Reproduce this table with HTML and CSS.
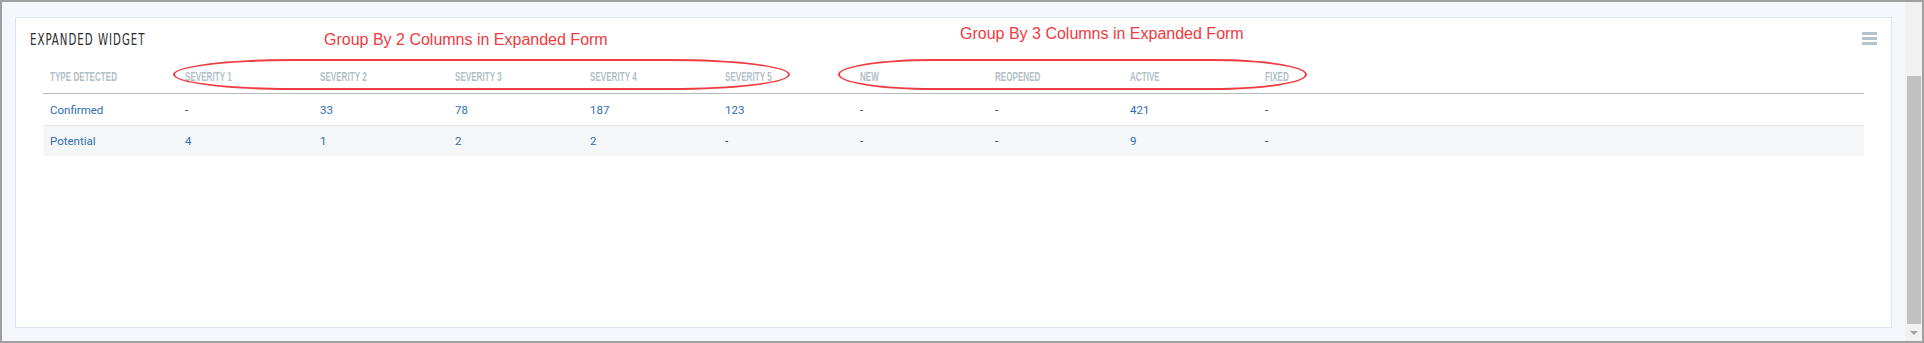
FILE: index.html
```html
<!DOCTYPE html>
<html>
<head>
<meta charset="utf-8">
<link rel="stylesheet" href="styles.css">
</head>
<body>
<div class="window">
  <div class="main">
    <div class="panel">
      <div class="panel-head">
        <div class="title"><span>EXPANDED WIDGET</span></div>
        <div class="menu"><span></span><span></span><span></span></div>
      </div>
      <div class="table">
        <div class="row head">
          <div><span>TYPE DETECTED</span></div><div><span>SEVERITY 1</span></div><div><span>SEVERITY 2</span></div><div><span>SEVERITY 3</span></div><div><span>SEVERITY 4</span></div><div><span>SEVERITY 5</span></div><div><span>NEW</span></div><div><span>REOPENED</span></div><div><span>ACTIVE</span></div><div><span>FIXED</span></div>
        </div>
        <div class="row body">
          <div>Confirmed</div><div class="dash">-</div><div>33</div><div>78</div><div>187</div><div>123</div><div class="dash">-</div><div class="dash">-</div><div>421</div><div class="dash">-</div>
        </div>
        <div class="row body alt">
          <div>Potential</div><div>4</div><div>1</div><div>2</div><div>2</div><div class="dash">-</div><div class="dash">-</div><div class="dash">-</div><div>9</div><div class="dash">-</div>
        </div>
      </div>
    </div>
  </div>
  <div class="scrollbar">
    <div class="sb-top"></div>
    <div class="sb-thumb"></div>
    <div class="sb-down"><i></i></div>
  </div>
  <div class="note note-1">Group By 2 Columns in Expanded Form</div>
  <div class="note note-2">Group By 3 Columns in Expanded Form</div>
  <div class="ring ring-1"></div>
  <div class="ring ring-2"></div>
</div>
</body>
</html>
```
FILE: styles.css
```css
* { box-sizing: border-box; }
html, body { margin: 0; padding: 0; }
body { width: 1924px; height: 343px; overflow: hidden; background: #f5f7fc; }

.window {
  position: relative;
  width: 1924px;
  height: 343px;
  border: 2px solid #a0a0a0;
  display: flex;
  background: #f5f7fc;
}

.main {
  flex: 1;
  padding: 15px 13px 13px 13px;
  display: flex;
}

.panel {
  flex: 1;
  background: #fff;
  border: 1px solid #dce4ef;
  display: flex;
  flex-direction: column;
}

.panel-head {
  display: flex;
  justify-content: space-between;
  align-items: flex-start;
  padding: 12px 14px 0 14px;
}

.title {
  font-family: "DejaVu Sans Condensed", "DejaVu Sans", sans-serif;
  font-size: 16px;
  line-height: 20px;
  letter-spacing: 1.4px;
  color: #2b2b2b;
}
.title span {
  display: inline-block;
  transform: scaleX(0.71);
  transform-origin: left center;
}

.menu {
  margin-top: 2px;
  width: 15px;
  display: flex;
  flex-direction: column;
  gap: 2px;
}
.menu span {
  display: block;
  height: 3px;
  background: #b6c3cb;
}

.table {
  margin: 10px 27px 0 27px;
}

.row {
  display: grid;
  grid-template-columns: repeat(9, 135px) 1fr;
  align-items: center;
}
.row > div { padding-left: 7px; white-space: nowrap; }

.row.head {
  height: 34px;
  border-bottom: 1px solid #b3babf;
  font-family: "Liberation Sans", Arial, sans-serif;
  font-weight: bold;
  font-size: 13.5px;
  color: #b3bfc7;
}
.row.head span {
  display: inline-block;
  transform: scaleX(0.6);
  transform-origin: left center;
}

.row.body {
  font-family: Roboto, "Liberation Sans", sans-serif;
  font-size: 11.5px;
  color: #2e6db4;
}
.row.body:not(.alt) { height: 32px; border-bottom: 1px solid #e3e7ea; }
.row.body.alt { height: 30px; background: #f5f6f8; }
.row.body .dash { color: #333; }

.scrollbar {
  width: 17px;
  background: #f1f1f1;
  display: flex;
  flex-direction: column;
}
.sb-top { height: 74px; }
.sb-thumb { flex: 1; margin: 0 1px 0 2px; background: #c1c1c1; }
.sb-down { height: 17px; display: flex; justify-content: center; align-items: center; }
.sb-down i {
  width: 0; height: 0;
  border-left: 4px solid transparent;
  border-right: 4px solid transparent;
  border-top: 4px solid #a3a3a3;
}

.note {
  position: absolute;
  font-family: "Liberation Sans", Arial, sans-serif;
  font-size: 16px;
  line-height: 18px;
  color: #f03a3f;
  white-space: nowrap;
}
.note-1 { left: 322px; top: 29px; }
.note-2 { left: 958px; top: 23px; }

.ring {
  position: absolute;
  border: 2.5px solid #ef3c40;
  height: 31px;
  top: 57px;
}
.ring-1 { left: 171px; width: 617px; border-radius: 120px / 15.5px; }
.ring-2 { left: 836px; width: 469px; border-radius: 95px / 15.5px; }
```
